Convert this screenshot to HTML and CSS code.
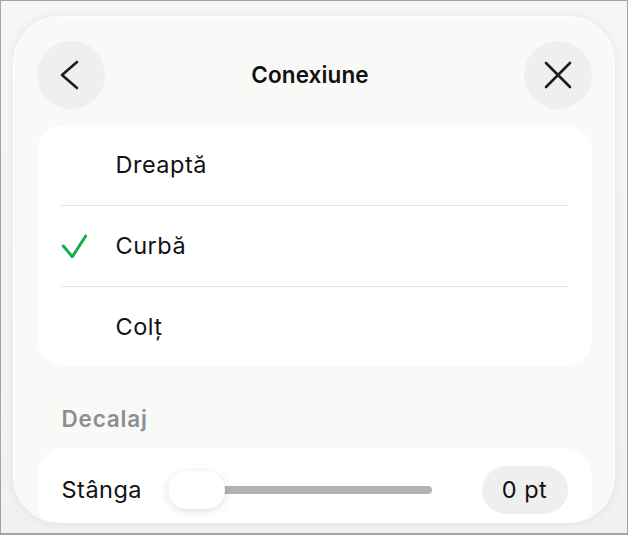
FILE: index.html
```html
<!DOCTYPE html>
<html lang="ro">
<head>
<meta charset="utf-8">
<title>Conexiune</title>
<link rel="stylesheet" href="styles.css">
</head>
<body>
<div class="frame">
  <div class="panel">
    <header class="header">
      <button class="round-btn" aria-label="Înapoi">
        <svg width="30" height="30" viewBox="0 0 30 30"><path d="M21 2 L6 15 L21 28" fill="none" stroke="#1c1c1e" stroke-width="2.6" stroke-linecap="round" stroke-linejoin="round"/></svg>
      </button>
      <h1 class="title">Conexiune</h1>
      <button class="round-btn" aria-label="Închide">
        <svg width="30" height="30" viewBox="0 0 30 30"><path d="M3 3 L27 27 M27 3 L3 27" fill="none" stroke="#1c1c1e" stroke-width="2.6" stroke-linecap="round"/></svg>
      </button>
    </header>

    <ul class="card list">
      <li class="row"><span class="check"></span><span class="label">Dreaptă</span></li>
      <li class="row"><span class="check">
        <svg width="26" height="24" viewBox="0 0 26 24"><path d="M2.3 12 L11.3 22.7 L24.7 2" fill="none" stroke="#1eaa4e" stroke-width="3" stroke-linecap="round" stroke-linejoin="round"/></svg>
      </span><span class="label">Curbă</span></li>
      <li class="row"><span class="check"></span><span class="label">Colț</span></li>
    </ul>

    <h2 class="section">Decalaj</h2>

    <div class="card slider-card">
      <span class="label">Stânga</span>
      <div class="slider">
        <div class="track"></div>
        <div class="thumb"></div>
      </div>
      <span class="value">0 pt</span>
    </div>
  </div>
</div>
</body>
</html>
```

FILE: styles.css
```css
* { box-sizing: border-box; }

html, body {
  margin: 0;
  padding: 0;
}

body {
  width: 628px;
  height: 535px;
  font-family: Inter, "Noto Sans", "Liberation Sans", sans-serif;
  color: #111;
  background: #fff;
}

.frame {
  width: 628px;
  height: 535px;
  border: 1px solid #a4a4a4;
  border-bottom-width: 2px;
  background: linear-gradient(180deg, #f6f6f6 0%, #f1f1f1 100%);
  overflow: hidden;
  padding: 15px 12px 0 12px;
}

.panel {
  height: 507px;
  background: #f9f9f8;
  border: 1.5px solid #ffffff;
  border-radius: 46px;
  box-shadow: 0 0 10px rgba(0, 0, 0, 0.07);
  overflow: hidden;
  padding: 23.5px 22.5px 0 22.5px;
  display: flex;
  flex-direction: column;
}

.header {
  display: flex;
  align-items: center;
  justify-content: space-between;
  height: 68px;
  flex: none;
}

.round-btn {
  width: 68px;
  height: 68px;
  border-radius: 50%;
  border: none;
  background: #efefef;
  display: flex;
  align-items: center;
  justify-content: center;
  padding: 0;
}

.title {
  margin: 0 8px 0 0;
  font-size: 22.5px;
  font-weight: 600;
  color: #111;
  letter-spacing: 0.1px;
}

.card {
  background: #fff;
  border-radius: 28px;
  margin: 0;
  padding: 0;
}

.list {
  list-style: none;
  margin-top: 16px;
  flex: none;
}

.row {
  display: flex;
  align-items: center;
  height: 81px;
  margin: 0 24px;
  border-top: 1px solid #e4e4e4;
}

.row:first-child {
  border-top: none;
  height: 80px;
}

.row:last-child { height: 80px; }

.check {
  width: 55px;
  flex: none;
  display: flex;
  align-items: center;
}

.label {
  font-size: 23.5px;
  letter-spacing: 0.5px;
  color: #111;
}

.section {
  margin: 39px 0 0 25px;
  height: 43px;
  font-size: 22.5px;
  letter-spacing: 0.8px;
  font-weight: 600;
  color: #8e8e92;
  flex: none;
}

.slider-card {
  display: flex;
  align-items: center;
  height: 84px;
  padding: 0 24px 0 25px;
  flex: none;
}

.slider {
  position: relative;
  flex: 1;
  height: 40px;
  margin: 0 50px 0 26px;
  display: flex;
  align-items: center;
}

.track {
  width: 100%;
  height: 8px;
  border-radius: 4px;
  background: #b3b3b3;
}

.thumb {
  position: absolute;
  left: 0;
  top: 1px;
  width: 57px;
  height: 38px;
  border-radius: 19px;
  background: #fff;
  box-shadow: 0 2px 10px rgba(0, 0, 0, 0.13);
}

.value {
  width: 86px;
  height: 48px;
  border-radius: 24px;
  background: #efeff0;
  display: flex;
  align-items: center;
  justify-content: center;
  font-size: 23.5px;
  letter-spacing: 0.5px;
  color: #111;
}
```
